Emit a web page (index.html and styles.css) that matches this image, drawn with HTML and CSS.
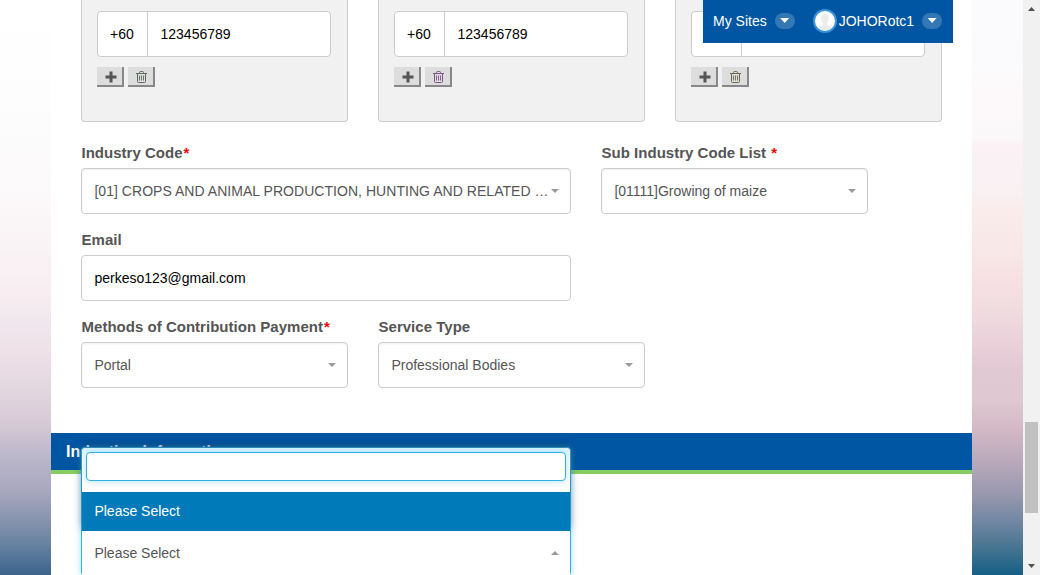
FILE: index.html
```html
<!DOCTYPE html>
<html lang="en">
<head>
<meta charset="utf-8">
<title>Employer Information</title>
<link rel="stylesheet" href="styles.css">
</head>
<body>
<svg class="defs" aria-hidden="true">
  <symbol id="plus" viewBox="0 0 12 12"><path d="M4.5 .5h3v4h4v3h-4v4h-3v-4h-4v-3h4z" fill="currentColor"/></symbol>
  <symbol id="trash" viewBox="0 0 11 12"><path d="M0 2.500h11M3.500 2.500V1.500q0-1 1-1h2q1 0 1 1v1M1.500 3v7.500q0 1 1 1h6q1 0 1-1V3" fill="none" stroke="currentColor"/><path d="M3.500 4.500v5M5.500 4.500v5M7.500 4.500v5" fill="none" stroke="currentColor" stroke-width=".9"/></symbol>
</svg>
<div class="page">
  <div class="side side-left"></div>
  <main class="content">
    <div class="phones">
      <div class="phone-card">
        <div class="phone-input"><span class="prefix">+60</span><span class="number">123456789</span></div>
        <div class="buttons"><button class="btn"><svg class="plus"><use href="#plus"/></svg></button><button class="btn"><svg class="trash trash-green"><use href="#trash"/></svg></button></div>
      </div>
      <div class="phone-card">
        <div class="phone-input"><span class="prefix">+60</span><span class="number">123456789</span></div>
        <div class="buttons"><button class="btn"><svg class="plus"><use href="#plus"/></svg></button><button class="btn"><svg class="trash trash-purple"><use href="#trash"/></svg></button></div>
      </div>
      <div class="phone-card">
        <div class="phone-input"><span class="prefix"></span><span class="number"></span></div>
        <div class="buttons"><button class="btn"><svg class="plus"><use href="#plus"/></svg></button><button class="btn"><svg class="trash trash-olive"><use href="#trash"/></svg></button></div>
      </div>
    </div>
    <div class="row">
      <div class="field wide"><div class="label">Industry Code<span class="req">*</span></div><div class="box select"><span class="value long">[01] CROPS AND ANIMAL PRODUCTION, HUNTING AND RELATED …</span><i class="caret"></i></div></div>
      <div class="field"><div class="label">Sub Industry Code List <span class="req">*</span></div><div class="box select"><span class="value">[01111]Growing of maize</span><i class="caret"></i></div></div>
    </div>
    <div class="row">
      <div class="field wide"><div class="label">Email</div><div class="box email">perkeso123@gmail.com</div></div>
    </div>
    <div class="row">
      <div class="field"><div class="label">Methods of Contribution Payment<span class="req">*</span></div><div class="box select"><span class="value">Portal</span><i class="caret"></i></div></div>
      <div class="field"><div class="label">Service Type</div><div class="box select"><span class="value">Professional Bodies</span><i class="caret"></i></div></div>
    </div>
    <h2 class="section">Induction Information</h2>
    <div class="open-select">
      <div class="menu">
        <div class="search"></div>
        <div class="option">Please Select</div>
      </div>
      <div class="current"><span class="value">Please Select</span><i class="caret up"></i></div>
    </div>
  </main>
  <div class="side side-right"></div>
  <div class="scrollbar"><i class="arrow-up"></i><div class="thumb"></div><i class="arrow-down"></i></div>
  <nav class="userbar">
    <span>My Sites</span><span class="pill"><i class="caret white"></i></span>
    <span class="avatar"><svg viewBox="0 0 20 20"><path d="M10 3c-3 0-4.2 2-3.8 5 .2 2 1 3.200 1.900 4.200v1.300L4 16v3h12v-3l-4.100-2.500v-1.300c.9-1 1.700-2.200 1.900-4.200C14.200 5 13 3 10 3z" fill="#ececec"/></svg></span>
    <span>JOHORotc1</span><span class="pill"><i class="caret white"></i></span>
  </nav>
</div>
</body>
</html>
```
FILE: styles.css
```css
* { box-sizing: border-box; }
body { margin: 0; height: 575px; overflow: hidden; font: 14px/20px "Liberation Sans", Arial, sans-serif; color: #555; background: #fff; }
.defs { position: absolute; width: 0; height: 0; }
.page { position: relative; display: flex; height: 575px; overflow: hidden; }
.side { width: 51px; flex: none; }
.side-left { background: linear-gradient(#fff 0, #fdfdfd 110px, #fcf9fa 190px, #f9f3f5 250px, #f8edf0 295px, #f0e8ee 320px, #efe1e8 350px, #e4d8e0 385px, #d8cbd7 420px, #bcb8cb 455px, #a9a8bf 490px, #8794ae 520px, #6582a0 545px, #3d638d 575px); }
.side-right { background: linear-gradient(#fbfbfd 0, #fafafc 60px, #fdf9fa 90px, #fbf8f9 138px, #fcf2f6 145px, #f9f0f2 195px, #fbecec 210px, #f7e7e7 255px, #f6e0e3 280px, #efdbdf 315px, #ead1da 340px, #e1c8d2 370px, #dec8d1 400px, #d4b8c6 430px, #b5a7b9 465px, #9998ae 494px, #7186a2 522px, #43738f 550px, #155f86 575px); }
.content { width: 921px; flex: none; background: #fff; }
.phones { display: flex; gap: 30px; padding: 0 30px; height: 122px; }
.phone-card { width: 267px; padding: 11px 16px 0 15px; background: #f1f1f1; border: solid #ccc; border-width: 0 1px 1px; border-radius: 0 0 4px 4px; }
.phone-input { display: flex; width: 234px; height: 46px; line-height: 44px; color: #000; background: #fff; border: 1px solid #ccc; border-radius: 4px; }
.prefix { width: 50px; border-right: 1px solid #ccc; padding-left: 12px; }
.number { padding-left: 12.5px; }
.buttons { display: flex; gap: 4px; margin-top: 10px; }
.btn { display: flex; align-items: center; justify-content: center; width: 27px; height: 20px; padding: 0; color: #555; background: #ddd; border: solid #888; border-width: 0 2px 2px 0; }
.plus { width: 12px; height: 12px; margin: 1px 0 0 2px; }
.trash { width: 11px; height: 12px; margin: 2px 0 0 2px; }
.trash-green { color: #5d6b5f; }
.trash-purple { color: #80508a; }
.trash-olive { color: #6b6850; }
.row { display: flex; gap: 30px; padding: 21px 30px 0; }
.row + .row { padding-top: 16px; }
.field { width: 267px; }
.wide { width: 490px; }
.label { height: 25px; padding-left: .5px; font-weight: bold; font-size: 15px; letter-spacing: .02px; white-space: nowrap; }
.req { margin-left: 1px; color: #f00; }
.box { height: 46px; line-height: 44px; border: 1px solid #ccc; border-radius: 4px; padding-left: 12.4px; }
.select, .current { display: flex; align-items: center; justify-content: space-between; }
.select { padding-right: 11px; box-shadow: inset 0 1px 2px #0001; }
.value { white-space: nowrap; }
.long { letter-spacing: .04px; }
.email { color: #000; }
.caret { width: 8px; height: 4px; flex: none; background: #999; clip-path: polygon(0 0, 100% 0, 50% 100%); }
.up { clip-path: polygon(0 100%, 50% 0, 100% 100%); }
.section { height: 41px; margin: 45px 0 0; padding-left: 15px; color: #fff; background: #0056a3; border-bottom: 4px solid #87cd62; font-size: 16px; line-height: 37px; }
.open-select { position: relative; width: 490px; height: 129px; margin: -27px 0 0 30px; border: 1px solid #36aee5; border-radius: 4px; background: #fff; box-shadow: 0 0 6px #58c5ff99; }
.menu { height: 83px; padding: 4px 4px 0; box-shadow: 0 -3px 10px #0005; border-radius: 4px 4px 0 0; background: linear-gradient(#d9f3ff 0, #fff 12px); }
.search { height: 29px; border: 1px solid #36aee5; border-radius: 4px; background: #fff; box-shadow: 0 0 7px #66cfff99; }
.option { height: 39px; margin: 11px -4px 0; padding-left: 12.4px; line-height: 39px; color: #fff; background: #007ab8; }
.current { position: relative; height: 44px; padding: 0 11px 0 12.4px; background: #fff; }
.scrollbar { width: 17px; flex: none; background: #f1f1f1; padding: 7px 2px 0; }
.thumb { width: 13px; height: 91px; margin-top: 411px; background: #c1c1c1; }
.arrow-up, .arrow-down { display: block; width: 7px; height: 4px; margin-left: 3px; background: #505050; clip-path: polygon(0 100%, 50% 0, 100% 100%); }
.arrow-down { margin-top: 51px; clip-path: polygon(0 0, 100% 0, 50% 100%); }
.userbar { position: absolute; left: 703px; top: 0; width: 250px; height: 43px; display: flex; align-items: center; padding: 0 0 2px 10px; color: #fff; background: #0056a3; white-space: nowrap; }
.pill { display: flex; align-items: center; justify-content: center; width: 20px; height: 16px; margin-left: 8px; border-radius: 8px; background: #3378b5; }
.white { width: 9px; height: 5px; background: #fff; }
.avatar { width: 24px; height: 24px; margin: 0 2px 0 18px; border: 2px solid #3994dc; border-radius: 50%; background: #fff; overflow: hidden; }
.avatar svg { display: block; width: 20px; height: 20px; }
```
